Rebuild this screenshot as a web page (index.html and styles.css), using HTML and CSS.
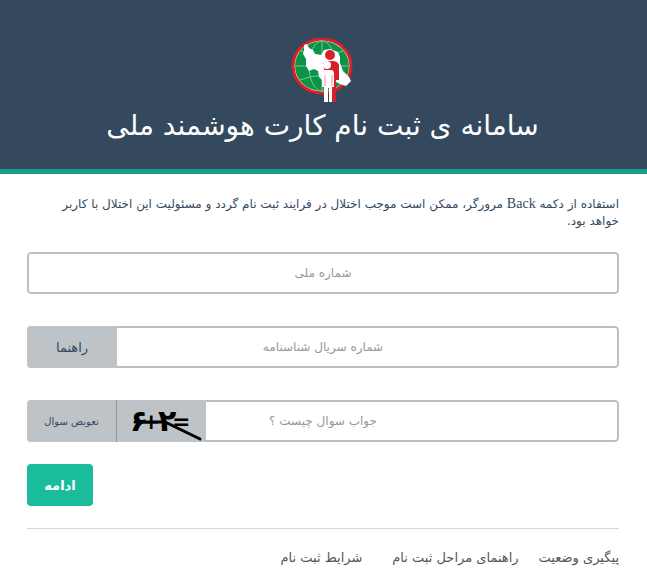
FILE: index.html
```html
<!DOCTYPE html>
<html lang="fa" dir="rtl">
<head>
    <meta charset="UTF-8">
    <meta name="viewport" content="width=device-width, initial-scale=1.0">
    <title>سامانه ی ثبت نام کارت هوشمند ملی</title>
    <link rel="stylesheet" href="styles.css">
</head>
<body>
    <header class="header">
        <svg class="logo" viewBox="0 0 64 66" width="64" height="66" aria-hidden="true">
            <ellipse cx="31" cy="28" rx="29" ry="27" fill="#f3d9b0" stroke="#d8202c" stroke-width="3"/>
            <ellipse cx="31" cy="28" rx="27" ry="25" fill="#0b9347"/>
            <g fill="none" stroke="#7cc68f" stroke-width="1">
                <ellipse cx="31" cy="28" rx="13" ry="25"/>
                <path d="M31 3v50M4 28h54M10 13q21 9 42 0M9 42q22-9 44 0"/>
            </g>
            <path d="M13 7L16 6 18 10 22 12 24 16 30 17 33 12 39 11 47 14 49 19 49 25 52 33 58 39 60 43 55 48 49 46 43 43 32 43 28 39 27 33 23 31 18 33 15 28 15 21 12 16 13 12z" fill="#fff"/>
            <circle cx="39" cy="17" r="5" fill="#d8202c"/>
            <path d="M32 25q2-2 5-2h6q5 1 5 5v14h-3v22h-5V42h-5z" fill="#d8202c"/>
            <circle cx="36" cy="27" r="4" fill="#fff"/>
            <path d="M34 32h6q3 0 3 4v13h-2v15h-3V50h-1v14h-4V49h-2V36q0-4 3-4z" fill="#fff"/>
            <path d="M34 37v11M41 37v11" fill="none" stroke="#d8202c" stroke-width=".5"/>
        </svg>
        <h1 class="title">سامانه ی ثبت نام کارت هوشمند ملی</h1>
    </header>

    <main class="container">
        <p class="notice">استفاده از دکمه <span class="latin">Back</span> مرورگر، ممکن است موجب اختلال در فرایند ثبت نام گردد و مسئولیت این اختلال با کاربر خواهد بود.</p>

        <form class="form">
            <div class="field">
                <input type="text" placeholder="شماره ملی" aria-label="شماره ملی">
            </div>
            <div class="field serial">
                <input type="text" placeholder="شماره سریال شناسنامه" aria-label="شماره سریال شناسنامه">
                <button type="button" class="addon">راهنما</button>
            </div>
            <div class="field answer">
                <input type="text" placeholder="جواب سوال چیست ؟" aria-label="جواب سوال چیست ؟">
                <svg class="captcha" viewBox="0 0 89 42" width="89" height="42" direction="ltr">
                    <text x="13" y="31">۶</text>
                    <text x="25" y="29" class="sign">+</text>
                    <text x="41" y="31">۲</text>
                    <text x="55" y="29" class="sign">=</text>
                    <path d="M18 22L48 22L83 39" fill="none" stroke="#000" stroke-width="3" stroke-linecap="round"/>
                </svg>
                <button type="button" class="addon refresh">تعویض سوال</button>
            </div>
            <button type="submit" class="submit">ادامه</button>
        </form>

        <nav class="links">
            <a href="#">پیگیری وضعیت</a>
            <a href="#">راهنمای مراحل ثبت نام</a>
            <a href="#" class="terms">شرایط ثبت نام</a>
        </nav>
    </main>
</body>
</html>
```
FILE: styles.css
```css
* {
    box-sizing: border-box;
}
body {
    margin: 0;
    background-color: #fff;
    color: #34495e;
    font-family: "DejaVu Sans", sans-serif;
    font-size: 12px;
}
.header {
    display: flex;
    flex-direction: column;
    align-items: center;
    padding: 38px 28px 22px 26px;
    background-color: #34495e;
    border-bottom: 5px solid #16a085;
    color: #fff;
}
.logo {
    display: block;
}
.title {
    margin: 0;
    font-size: 28px;
    font-weight: normal;
    line-height: 43px;
    white-space: nowrap;
}
.container {
    padding: 22px 28px 16px 27px;
}
.notice {
    margin: 0 0 22px;
    padding-left: 16px;
    line-height: 17px;
}
.latin {
    font-family: "Liberation Serif", serif;
    font-size: 14px;
    line-height: 1;
}
.field {
    display: flex;
    height: 42px;
    margin-bottom: 32px;
    border-radius: 4px;
    overflow: hidden;
}
.field.answer {
    margin-bottom: 22px;
}
.field input {
    flex: 1;
    min-width: 0;
    padding: 0 12px;
    border: 2px solid #bdbfc1;
    border-radius: 4px;
    background-color: #fff;
    color: #34495e;
    font: inherit;
    text-align: center;
}
.field input:not(:last-child) {
    border-left: 0;
    border-radius: 0 4px 4px 0;
}
/* keep the text centred on the whole row, addons included */
.serial input {
    padding-right: 100px;
}
.answer input {
    padding-right: 189px;
}
.field input::placeholder {
    color: #8f9b9d;
    opacity: 1;
}
.addon {
    width: 90px;
    padding: 0;
    border: 0;
    background-color: #bdc3c7;
    color: #34495e;
    font-family: inherit;
    font-size: 13px;
}
.refresh {
    border-right: 1px solid #8d9396;
    font-size: 10px;
}
.captcha {
    background-color: #bdc3c7;
    font: bold 30px "DejaVu Sans", sans-serif;
}
.captcha .sign {
    font-size: 22px;
}
.submit {
    display: block;
    width: 66px;
    height: 42px;
    margin-right: auto;
    padding: 0;
    border: 0;
    border-radius: 4px;
    background-color: #1abc9c;
    color: #fff;
    font-family: inherit;
    font-size: 13px;
    font-weight: bold;
}
.links {
    display: flex;
    gap: 20px;
    margin-top: 22px;
    padding-top: 20px;
    border-top: 1px solid #d5d8da;
    font-size: 13px;
    line-height: 18px;
}
.links a {
    color: #555;
    text-decoration: none;
    white-space: nowrap;
}
.links .terms {
    margin-right: 10px;
}
```
